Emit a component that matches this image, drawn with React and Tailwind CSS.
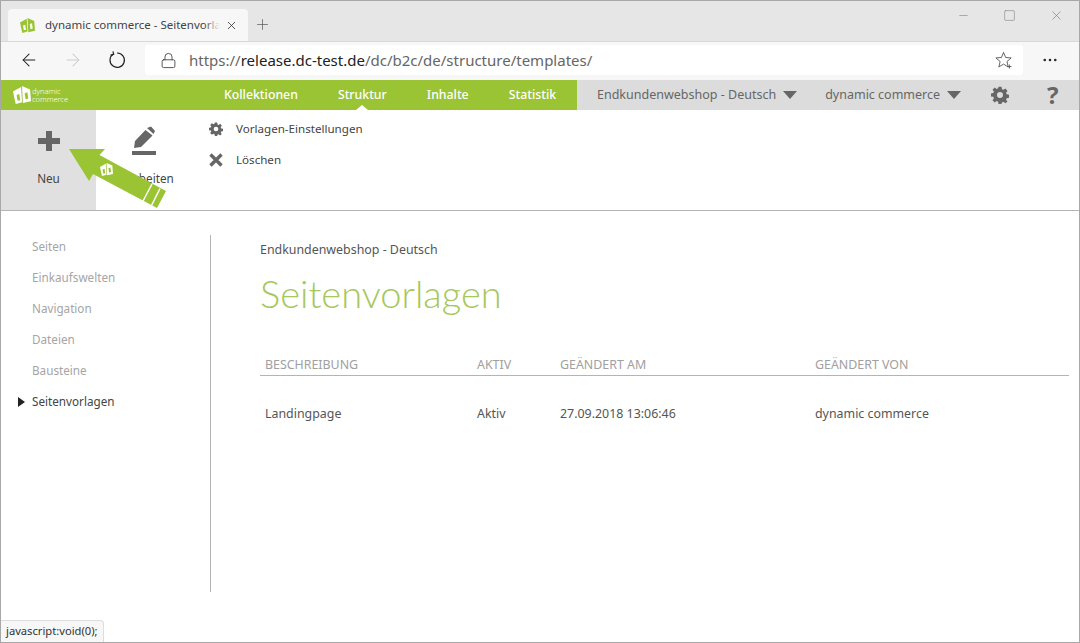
import React from "react";
import { ArrowLeft, ArrowRight, Lock, Plus, X, Minus, Square, Ellipsis } from "lucide-react";

const font = { fontFamily: "'Noto Sans', sans-serif" };

const LogoMark = ({ className, fg = "#fff", bg = "none" }) => (
  <svg viewBox="0 0 20 20" className={className}>
    <path d="M0 6 L9 1 L10 18 L3 20 Z" fill={fg} />
    <path d="M10 0 L19 4 L20 17 L11 19 Z" fill={fg} />
    <path d="M4 10 L7 9 L8 16 L5 16 Z" fill={bg} />
    <path d="M13 8 L16 7 L17 14 L14 15 Z" fill={bg} />
  </svg>
);

const Gear = ({ className }) => (
  <svg viewBox="0 0 24 24" className={className} fill="currentColor">
    <path
      fillRule="evenodd"
      d="M10 1h4l.6 3.2 2 .8L19.300 3.200 22 6.500l-1.900 2.600.8 2 3.100.6v4l-3.100.6-.8 2L22 20.500 19 23l-2.500-1.900-2 .8L14 24h-4l-.5-3.100-2-.8L5 22l-3-3 1.900-2.600-.8-2L0 14v-4l3.100-.6.800-2L2 5l3-3 2.500 1.900 2-.8z M12 8a4 4 0 1 0 0 8 4 4 0 0 0 0-8z"
    />
  </svg>
);

const Caret = () => (
  <span className="ml-[7px] h-0 w-0 border-x-[7px] border-t-[8px] border-x-transparent border-t-[#666]" />
);

const sideItems = ["Seiten", "Einkaufswelten", "Navigation", "Dateien", "Bausteine", "Seitenvorlagen"];

const BrowserChrome = () => (
  <>
    <div className="flex h-[40px] bg-[#e6e6e6] pl-[7px] pt-[8px]">
      <div className="flex h-[32px] w-[240px] items-center rounded-t-[4px] bg-[#f7f7f7] pl-[12px]">
        <LogoMark className="h-[15px] w-[15px]" fg="#9ac434" bg="#f7f7f7" />
        <span className="relative ml-[10px] w-[175px] overflow-hidden whitespace-nowrap text-[11.5px] text-[#444]">
          dynamic commerce - Seitenvorla
          <span className="absolute right-0 top-0 h-full w-[16px] bg-gradient-to-r from-transparent to-[#f7f7f7]" />
        </span>
        <X className="ml-[5px] h-[13px] w-[13px] text-[#333]" strokeWidth={1.5} />
      </div>
      <Plus className="ml-[6px] mt-[7px] h-[17px] w-[17px] text-[#555]" strokeWidth={1} />
      <div className="ml-auto flex items-start text-[#777]">
        <Minus className="h-[13px] w-[13px]" strokeWidth={1} />
        <Square className="ml-[33px] h-[13px] w-[13px]" strokeWidth={1} />
        <X className="ml-[33px] mr-[15px] -mt-[1px] h-[15px] w-[15px]" strokeWidth={1} />
      </div>
    </div>
    <div className="flex h-[39px] items-center border-t border-t-[#d8d8d8] bg-[#f7f7f7] pb-[2px] pl-[18px]">
      <ArrowLeft className="h-[20px] w-[20px] text-[#222]" strokeWidth={1.25} />
      <ArrowRight className="ml-[24px] h-[20px] w-[20px] text-[#ccc]" strokeWidth={1.25} />
      <svg viewBox="0 0 20 20" fill="none" stroke="#222" strokeWidth="1.3" className="ml-[25px] h-[18px] w-[18px]">
        <path d="M6 3.400 A8 8 0 1 0 10 2.200" />
        <path d="M5.500 0.500 L6.300 3.800 L2.800 4.600" />
      </svg>
      <div className="ml-[19px] flex h-[30px] w-[878px] items-center rounded-[3px] bg-white pl-[15px] pr-[10px]">
        <Lock className="h-[17px] w-[17px] text-[#444]" strokeWidth={1.25} />
        <span className="ml-[12px] whitespace-nowrap text-[15px] text-[#666]">
          https://<span className="text-[#222]">release.dc-test.de</span>/dc/b2c/de/structure/templates/
        </span>
        <svg viewBox="0 0 20 20" fill="none" stroke="#555" strokeWidth="1" className="ml-auto h-[18px] w-[18px]">
          <path d="M9.500 1.500 L11.800 7.200 L18 7.700 L13.300 11.700 L14.700 17.800 L9.500 14.500 L4.300 17.800 L5.700 11.700 L1 7.700 L7.200 7.200 Z" />
          <path d="M16 15 V19.500 M13.800 17.300 H18.300" />
        </svg>
      </div>
      <Ellipsis className="ml-[18px] h-[18px] w-[18px] text-[#222]" strokeWidth={1.5} />
    </div>
  </>
);

const TopNav = () => (
  <div className="flex h-[30px]">
    <div className="relative flex w-[576px] items-center bg-[#9ac434] text-[12.3px] font-medium text-white">
      <div className="ml-[12px] flex w-[211px] items-center">
        <LogoMark className="h-[18px] w-[18px]" fg="#fff" bg="#9ac434" />
        <span className="ml-[1px] text-[7.5px] font-light leading-[8px]">
          dynamic
          <br />
          commerce
        </span>
      </div>
      <span>Kollektionen</span>
      <span className="ml-[40px]">Struktur</span>
      <span className="ml-[40px]">Inhalte</span>
      <span className="ml-[40px]">Statistik</span>
      <span className="absolute bottom-0 left-[355px] h-0 w-0 border-x-[6px] border-b-[5px] border-x-transparent border-b-white" />
    </div>
    <div className="flex flex-1 items-center bg-[#dcdcdc] text-[12.5px] text-[#666]">
      <span className="ml-[20px]">Endkundenwebshop - Deutsch</span>
      <Caret />
      <span className="ml-[28px]">dynamic commerce</span>
      <Caret />
      <Gear className="ml-[30px] h-[18px] w-[18px] text-[#666]" />
      <span className="ml-[38px] text-[24px] font-bold leading-[30px] text-[#666]">?</span>
    </div>
  </div>
);

const ActionBar = () => (
  <div className="flex h-[101px] border-b border-b-[#b4b4b4] bg-white text-[11.7px] text-[#444]">
    <div className="flex w-[95px] flex-col items-center bg-[#e0e0e0] pt-[16px]">
      <svg viewBox="0 0 30 30" className="h-[30px] w-[30px] text-[#666]" fill="currentColor">
        <path d="M12 5 H18 V12 H26 V18 H18 V25 H12 V18 H4 V12 H12 Z" />
      </svg>
      <span className="mt-[14px]">Neu</span>
    </div>
    <div className="flex w-[95px] flex-col items-center pt-[16px]">
      <svg viewBox="0 0 24 30" className="h-[30px] w-[24px] text-[#666]" fill="currentColor">
        <path d="M15 2 L19 0.500 L23 5 L21.500 8 Z M13.500 4 L20.500 9.500 L9 21 L2 22 L3 15 Z" />
        <rect x="0" y="25" width="24" height="4" />
      </svg>
      <span className="mt-[14px]">Bearbeiten</span>
    </div>
    <div className="ml-[18px] flex flex-col gap-[14px] pt-[10px]">
      <div className="flex h-[17px] items-center">
        <Gear className="h-[14px] w-[14px] text-[#666]" />
        <span className="ml-[13px] text-[11.6px]">Vorlagen-Einstellungen</span>
      </div>
      <div className="flex h-[17px] items-center">
        <svg viewBox="0 0 14 14" stroke="#666" strokeWidth="3.400" className="h-[14px] w-[14px]">
          <path d="M1.500 1.500 L12.500 12.500 M12.500 1.500 L1.500 12.500" />
        </svg>
        <span className="ml-[13px] text-[11.6px]">Löschen</span>
      </div>
    </div>
  </div>
);

const Sidebar = () => (
  <div className="mt-[24px] flex h-[357px] w-[210px] flex-col gap-[14px] border-r border-r-[#b4b4b4] pl-[17px] pt-[3px] text-[11.7px]">
    {sideItems.map((item) => (
      <div key={item} className="flex h-[17px] items-center">
        <span className="w-[14px]">
          {item === "Seitenvorlagen" && (
            <span className="block h-0 w-0 border-y-[5px] border-l-[7px] border-y-transparent border-l-[#222]" />
          )}
        </span>
        <span className={item === "Seitenvorlagen" ? "text-[#444]" : "text-[#a5a5a5]"}>{item}</span>
      </div>
    ))}
  </div>
);

const Content = () => (
  <div className="ml-[49px] mr-[10px] flex-1 pt-[30px] text-[12.4px] text-[#555]">
    <div className="h-[17px] leading-[17px]">Endkundenwebshop - Deutsch</div>
    <h1 className="mt-[10px] h-[50px] text-[38px] font-light leading-[50px] text-[#a5c85a]" style={{ fontFamily: "Lato, sans-serif" }}>
      Seitenvorlagen
    </h1>
    <div className="mt-[39px] flex h-[19px] items-center border-b border-b-[#b4b4b4] pb-[2px] pl-[5px] text-[#a0a0a0]">
      <span className="w-[212px]">BESCHREIBUNG</span>
      <span className="w-[83px]">AKTIV</span>
      <span className="w-[255px]">GEÄNDERT AM</span>
      <span>GEÄNDERT VON</span>
    </div>
    <div className="mt-[30px] flex h-[17px] items-center pl-[5px]">
      <span className="w-[212px]">Landingpage</span>
      <span className="w-[83px]">Aktiv</span>
      <span className="w-[255px]">27.09.2018 13:06:46</span>
      <span>dynamic commerce</span>
    </div>
  </div>
);

export default function App() {
  return (
    <div className="relative h-[643px] w-[1080px] overflow-hidden border border-[#a8a8a8] bg-white" style={font}>
      <BrowserChrome />
      <TopNav />
      <ActionBar />
      <div className="flex">
        <Sidebar />
        <Content />
      </div>

      {/* annotation arrow lying over the toolbar */}
      <svg viewBox="0 0 120 90" className="absolute left-[59px] top-[129px] h-[90px] w-[120px]">
        <path d="M9 19 L45 19 L39.500 25 L106 61 L97 78 L33 44 L29 51 Z" fill="#9ac434" />
        <path d="M92 54 L83 71 M100 58.500 L91.500 75.500" stroke="#fff" strokeWidth="1.500" />
        <g transform="translate(40 33) scale(0.65)">
          <path d="M0 6 L9 1 L10 18 L3 20 Z M10 0 L19 4 L20 17 L11 19 Z" fill="#fff" />
          <path d="M4 10 L7 9 L8 16 L5 16 Z M13 8 L16 7 L17 14 L14 15 Z" fill="#9ac434" />
        </g>
      </svg>

      {/* browser status bubble */}
      <div className="absolute bottom-0 left-0 flex h-[22px] items-center rounded-tr-[4px] border-r border-t border-r-[#ddd] border-t-[#ddd] bg-[#f7f7f7] px-[5px] text-[11.2px] text-[#333]">
        javascript:void(0);
      </div>
    </div>
  );
}
